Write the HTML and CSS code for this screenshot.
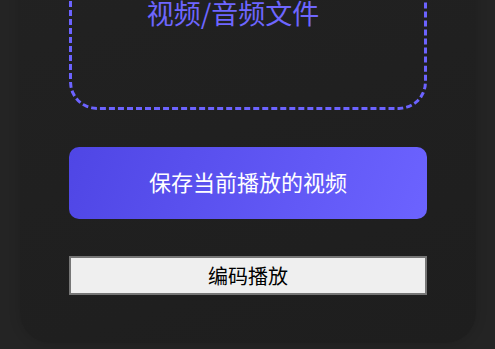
FILE: index.html
```html
<!DOCTYPE html>
<html lang="zh-CN">
<head>
    <meta charset="UTF-8">
    <title>视频播放</title>
    <link rel="stylesheet" href="styles.css">
</head>
<body class="main">
    <main class="card">
        <div class="drop_zone">
            <p class="drop_zone__text">视频/音频文件</p>
        </div>
        <button class="save_btn">保存当前播放的视频</button>
        <button class="encode_btn">编码播放</button>
    </main>
</body>
</html>
```

FILE: styles.css
```css
.main {
    margin: 0;
    padding-bottom: 6px;
    background: #242424;
    font-family: "Noto Sans CJK SC", "Noto Sans", sans-serif;
    overflow: hidden;
}

.card {
    margin: -100px 20px 0 20px;
    width: 456px;
    box-sizing: border-box;
    padding: 40px 49px 48px 49px;
    background: linear-gradient(160deg, #222 0%, #1e1e1e 100%);
    border-radius: 0 0 30px 30px;
    box-shadow: 0 0 12px rgba(0, 0, 0, 0.15);
}

.drop_zone {
    border: 3px dashed #6c63ff;
    border-radius: 28px;
    padding: 52px 30px 76px 0;
    text-align: center;
}
.drop_zone__text {
    margin: 0;
    color: #6e66ff;
    font-size: 27px;
    line-height: 36px;
}

.save_btn {
    display: block;
    width: 100%;
    height: 72px;
    margin-top: 37px;
    padding: 0 0 5px 0;
    border: none;
    border-radius: 10px;
    background: linear-gradient(110deg, #4f46e5 0%, #6c63ff 100%);
    color: #fff;
    font-family: inherit;
    font-size: 22px;
}

.encode_btn {
    display: block;
    width: 100%;
    height: 39px;
    margin-top: 37px;
    border: 2px solid #767676;
    border-radius: 0;
    background: #efefef;
    color: #000;
    font-family: inherit;
    font-size: 20px;
    padding: 0;
}
```
